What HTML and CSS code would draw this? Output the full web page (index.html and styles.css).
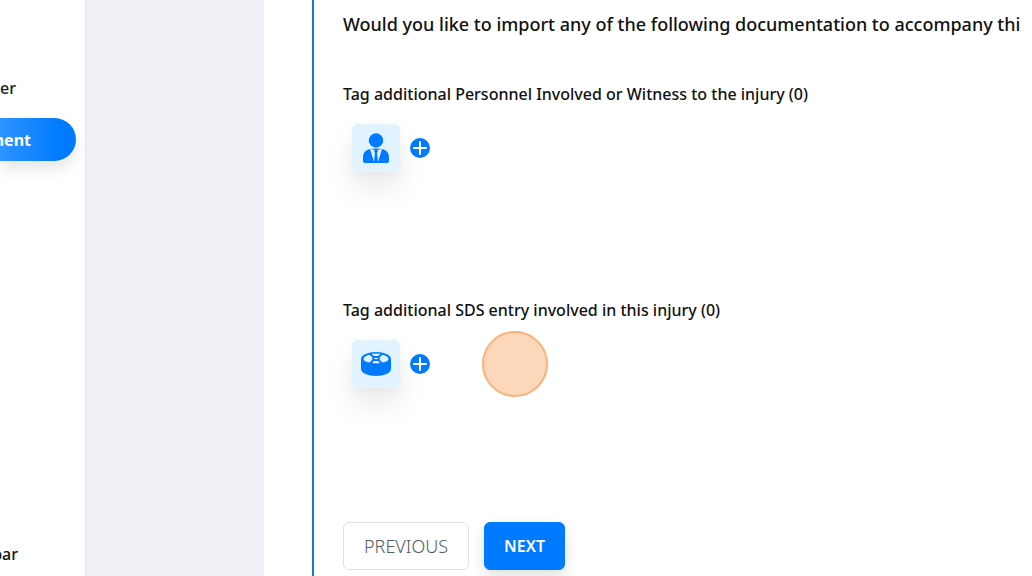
FILE: index.html
```html
<!DOCTYPE html>
<html lang="en">
<head>
  <meta charset="UTF-8">
  <meta name="viewport" content="width=device-width, initial-scale=1.0">
  <title>Injury Report</title>
  <link rel="stylesheet" href="styles.css">
</head>
<body>
  <nav class="sidebar">
    <a href="#" class="nav-link">ver</a>
    <a href="#" class="nav-link active">ment</a>
    <a href="#" class="nav-link nav-bottom">bar</a>
  </nav>

  <div class="page">
    <main class="card">
      <div class="step">
        <h1>Would you like to import any of the following documentation to accompany thi</h1>

        <section class="tag-group">
          <h2>Tag additional Personnel Involved or Witness to the injury (0)</h2>
          <div class="tag-row">
            <div class="tile">
              <svg width="26" height="30" viewBox="0 0 26 30" fill="#007bff">
                <circle cx="13" cy="7.5" r="7.2"/>
                <path d="M7 16C2 17 0 20 0 25v3q0 2 2 2h22q2 0 2-2v-3c0-5-2-8-7-9q-6-1-12 0z"/>
                <path d="M7 16l4 13 1-9-1-2 1-1zM19 16l-4 13-1-9 1-2-1-1z" fill="#e1f3ff"/>
              </svg>
            </div>
            <button class="add" aria-label="Add personnel">
              <svg width="20" height="20" viewBox="0 0 20 20">
                <circle cx="10" cy="10" r="10" fill="#007bff"/>
                <path d="M10 4v12M4 10h12" stroke="#fff" stroke-width="2" stroke-linecap="round"/>
              </svg>
            </button>
          </div>
        </section>

        <section class="tag-group">
          <h2>Tag additional SDS entry involved in this injury (0)</h2>
          <div class="tag-row">
            <div class="tile">
              <svg width="30" height="24" viewBox="0 0 30 24">
                <path d="M0 7C0 3 7 0 15 0s15 3 15 7v10c0 4-7 7-15 7S0 21 0 17z" fill="#007bff"/>
                <g fill="#e1f3ff">
                  <path d="M8.5 2.8l3 2.7q-1 1 0 2l-3 3Q3 9.5 2.5 7q.5-3 6-4.2z"/>
                  <path d="M21.5 2.8l-3 2.7q1 1 0 2l3 3q5.5-1 6-3.5-.5-3-6-4.2z"/>
                  <path d="M10.5 2q4.5-.8 9 0l-2.5 2h-4zM13 9h4l2 2q-4 .6-8 0z"/>
                  <ellipse cx="15" cy="6.5" rx="2" ry=".8"/>
                </g>
              </svg>
            </div>
            <button class="add" aria-label="Add SDS entry">
              <svg width="20" height="20" viewBox="0 0 20 20">
                <circle cx="10" cy="10" r="10" fill="#007bff"/>
                <path d="M10 4v12M4 10h12" stroke="#fff" stroke-width="2" stroke-linecap="round"/>
              </svg>
            </button>
            <span class="click-marker"></span>
          </div>
        </section>

        <div class="actions">
          <button class="btn">PREVIOUS</button>
          <button class="btn btn-primary">NEXT</button>
        </div>
      </div>
    </main>
  </div>
</body>
</html>
```
FILE: styles.css
```css
* { box-sizing: border-box; }
body { margin: 0; min-height: 100vh; display: flex; font-family: "Noto Sans", "Open Sans", sans-serif; font-size: 16px; color: #111; background: #fff; overflow: hidden; }

/* sidebar */
.sidebar { width: 86px; flex-shrink: 0; display: flex; flex-direction: column; padding-top: 66px; border-right: 1px solid #e2e3e8; overflow: hidden; }
.nav-link { display: flex; justify-content: flex-end; align-items: center; width: 76px; height: 44px; padding-right: 60px; color: #222; font-weight: 500; text-decoration: none; }
.nav-link.active { height: 43px; margin-top: 8px; padding-right: 45px; border-radius: 0 22px 22px 0; color: #fff; font-weight: 700; background: linear-gradient(90deg, #2e93ff, #007bff 80%); box-shadow: 0 8px 16px rgba(0, 0, 0, 0.1); }
.nav-bottom { margin-top: auto; padding-right: 58px; color: #111; }

/* content */
.page { flex: 1; min-width: 0; padding-left: 178px; background: #f0f1f6; }
.card { min-height: 100vh; padding-left: 48px; background: #fff; }
.step { min-height: 100vh; padding: 12px 0 0 29px; border-left: 2px solid #1c76d2; overflow: hidden; }
h1, h2 { margin: 0; font-weight: 500; line-height: 24px; white-space: nowrap; }
h1 { font-size: 18px; margin-bottom: 46px; }
h2 { font-size: 16px; }
.tag-group { height: 216px; }
.tag-row { display: flex; align-items: center; padding: 18px 9px; }
.tile { display: flex; justify-content: center; align-items: center; width: 48px; height: 48px; border-radius: 6px; background: #e1f3ff; box-shadow: 0 16px 30px rgba(0, 0, 0, 0.09), 0 4px 8px rgba(0, 0, 0, 0.03); }
.add { display: flex; margin-left: 10px; padding: 0; border: none; background: none; cursor: pointer; }
.click-marker { width: 66px; height: 66px; margin: -9px 0 -9px 52px; border: 2px solid #f8b27a; border-radius: 50%; background: #fdd7ba; }

/* buttons */
.actions { display: flex; gap: 15px; margin-top: 8px; padding-bottom: 6px; }
.btn { height: 48px; padding: 0 20px; border: 1px solid #e0e0e2; border-radius: 6px; font-family: inherit; font-size: 18px; font-weight: 300; color: #555a60; background: #fff; cursor: pointer; }
.btn-primary { padding: 0 19px; border-color: #007bff; font-size: 16px; font-weight: 600; color: #fff; background: #007bff; box-shadow: 0 6px 14px rgba(0, 0, 0, 0.12); }
```
